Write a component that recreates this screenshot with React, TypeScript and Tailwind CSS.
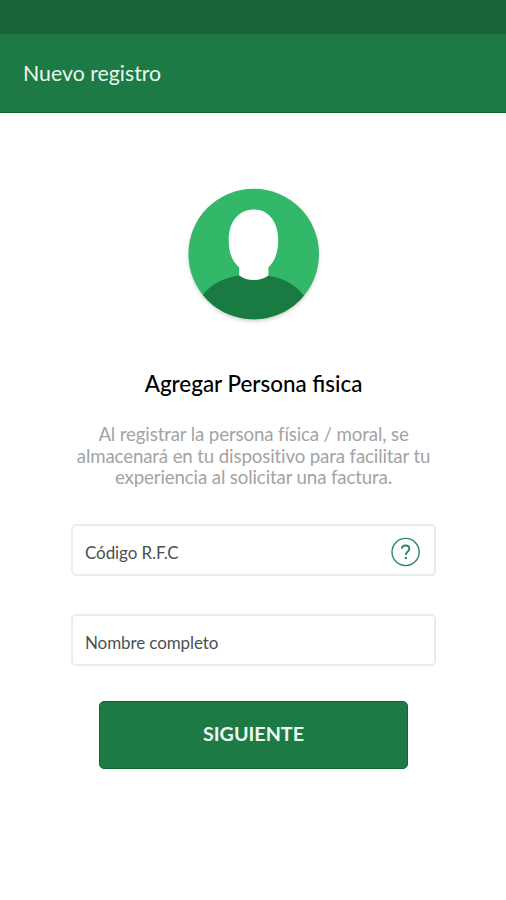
const fields = [
  { id: 'rfc', label: 'Código R.F.C', help: true },
  { id: 'nombre', label: 'Nombre completo', help: false },
]

function Avatar() {
  return (
    <svg className="h-[142px] w-[143px]" viewBox="-0.7 0 143 142" fill="none">
      <defs>
        <clipPath id="avatar-clip">
          <circle cx="71" cy="71" r="65.3" />
        </clipPath>
        <filter id="avatar-shadow" x="-10%" y="-10%" width="120%" height="120%">
          <feGaussianBlur stdDeviation="2" />
        </filter>
      </defs>
      <circle cx="71" cy="73.5" r="64.5" fill="#000" opacity="0.22" filter="url(#avatar-shadow)" />
      <circle cx="71" cy="71" r="65.3" fill="#33b768" />
      <g clipPath="url(#avatar-clip)">
        <path d="M18 115C28 99 47 91.5 71 91.5C94 91.5 112 99 123 115V142H18Z" fill="#197b42" />
      </g>
      <path
        d="M71 26.6C56 26.6 46 39 46 57C46 70 49.5 78 56.500 84.5V92.5C61 95.5 65 97 70.5 97C77 97 81.5 95.5 85.7 92.5V84.5C92 78 95.5 70 95.5 57C95.5 39 86 26.6 71 26.6Z"
        fill="#fff"
      />
    </svg>
  )
}

function HelpIcon() {
  return (
    <svg className="h-[30px] w-[30px]" viewBox="0 0 30 30" fill="none" stroke="#2c8560" strokeWidth="1.4">
      <circle cx="14.6" cy="15" r="13.6" />
      <path d="M10.8 11.6C11 9.5 12.5 8.5 14.6 8.5C16.8 8.5 18.3 9.9 18.3 11.9C18.3 14.6 14.9 14.6 14.8 18" strokeWidth="1.9" />
      <circle cx="14.8" cy="21" r="1.2" fill="#2c8560" stroke="none" />
    </svg>
  )
}

export default function App() {
  return (
    <div className="flex h-[900px] w-[506px] flex-col bg-white font-['Lato',sans-serif]">
      <div className="h-[34px] bg-[#186338]" />
      <header className="flex h-[79px] items-center border-b border-[#0c6328] bg-[#1d7a44] pl-[23px]">
        <h1 className="text-[21.3px] leading-6 text-[#eaf8ee]">Nuevo registro</h1>
      </header>

      <main className="flex flex-col items-center pt-[70px] pl-px">
        <Avatar />
        <h2 className="mt-[45px] text-[22.4px] leading-[28px] font-medium text-black">Agregar Persona fisica</h2>
        <p className="mt-[26px] text-center text-[18.7px] leading-[21.5px] tracking-[-0.14px] text-[#a3a3a3]">
          Al registrar la persona física / moral, se
          <br />
          almacenará en tu dispositivo para facilitar tu
          <br />
          experiencia al solicitar una factura.
        </p>

        <div className="mt-[35px] flex w-[365px] flex-col gap-[38px]">
          {fields.map((field) => (
            <div
              key={field.id}
              className="flex h-[52px] items-center justify-between rounded-[5px] border-2 border-[#ebebeb] pt-1.5 pr-[13px] pl-[12px]"
            >
              <span className="text-[17px] leading-5 tracking-[-0.1px] text-[#4b4f52]">{field.label}</span>
              {field.help && (
                <button type="button" className="-mt-0.5" aria-label="Ayuda">
                  <HelpIcon />
                </button>
              )}
            </div>
          ))}
        </div>

        <button
          type="button"
          className="mt-[35px] h-[68px] w-[309px] rounded-[5px] border border-[#0d692c] bg-[#1d7a44] pb-px text-[19.7px] font-bold text-[#eef9f0]"
        >
          SIGUIENTE
        </button>
      </main>
    </div>
  )
}
